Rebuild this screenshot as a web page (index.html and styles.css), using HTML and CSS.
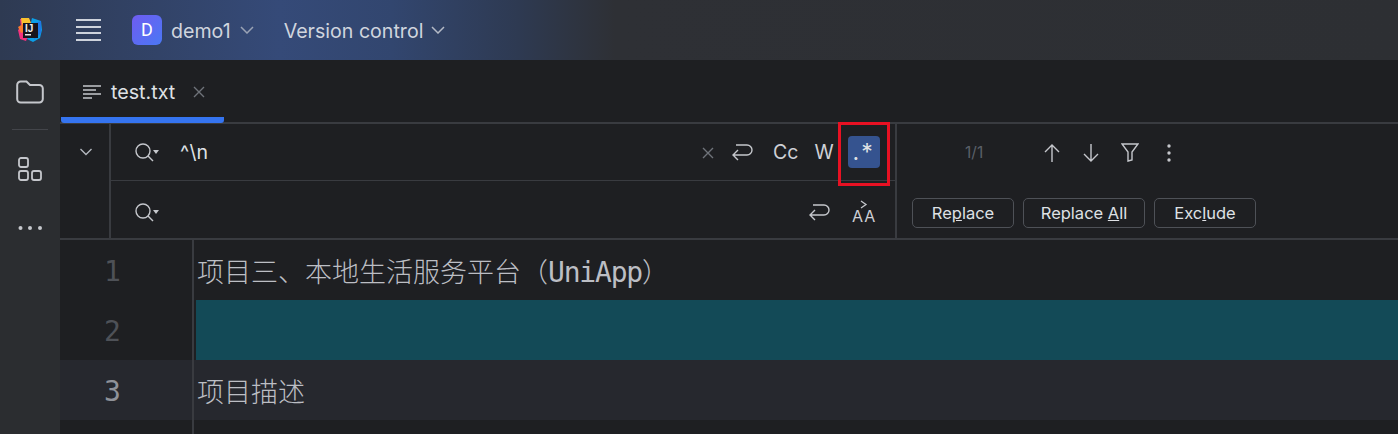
FILE: index.html
```html
<!DOCTYPE html>
<html lang="zh">
<head>
<meta charset="utf-8">
<title>test.txt</title>
<link rel="stylesheet" href="styles.css">
</head>
<body>
<header class="topbar">
  <div class="logo">
    <svg width="26" height="26" viewBox="0 0 26 26">
      <path d="M15 1l9 3 1 9-2 8-7 4-6-3z" fill="#0b9fe8"/>
      <path d="M18 6l6-2v12l-7 7z" fill="#1e78e6"/>
      <path d="M3 2h9l3 8-6 14-6-2-2-9 3-3z" fill="#f5317f"/>
      <path d="M4 1h8l2 5-9 3z" fill="#f9c22e"/>
      <path d="M1 10l5-3 1 8-3 1z" fill="#fb7a2e"/>
      <rect x="6" y="6" width="15" height="15" fill="#17141d"/>
      <rect x="8" y="17" width="6" height="1.500" fill="#e8e8e8"/>
    </svg>
    <span class="logo-text">IJ</span>
  </div>
  <div class="burger"><span></span><span></span><span></span><span></span></div>
  <div class="badge">D</div>
  <span class="menu-label project">demo1</span>
  <svg class="chev" width="14" height="8" viewBox="0 0 14 8"><path d="M1 1l6 6 6-6" fill="none" stroke="#9aa3b5" stroke-width="1.500"/></svg>
  <span class="menu-label vcs">Version control</span>
  <svg class="chev" width="14" height="8" viewBox="0 0 14 8"><path d="M1 1l6 6 6-6" fill="none" stroke="#b4bac6" stroke-width="1.500"/></svg>
</header>

<div class="body">
  <aside class="rail">
    <svg class="rail-folder" width="28" height="24" viewBox="0 0 28 24"><path d="M1.200 5a3.500 3.500 0 0 1 3.500-3.500h5.800l3.500 3.500h9.300a3.500 3.500 0 0 1 3.500 3.500v10.500a3.500 3.500 0 0 1-3.500 3.500H4.700a3.500 3.500 0 0 1-3.500-3.500z" fill="none" stroke="#c5c7cc" stroke-width="2"/></svg>
    <div class="rail-div"></div>
    <svg class="rail-group" width="24" height="24" viewBox="0 0 24 24" fill="none" stroke="#c5c7cc" stroke-width="1.800"><rect x="1" y="1" width="9" height="9" rx="2"/><rect x="1" y="14" width="9" height="9" rx="2"/><rect x="14" y="14" width="9" height="9" rx="2"/></svg>
    <svg class="rail-dots" width="24" height="6" viewBox="0 0 24 6" fill="#c5c7cc"><circle cx="2.500" cy="3" r="2"/><circle cx="12" cy="3" r="2"/><circle cx="22" cy="3" r="2"/></svg>
  </aside>

  <main class="main">
    <div class="tabs">
      <div class="tab">
        <svg width="18" height="14" viewBox="0 0 18 14" stroke="#c5c7cc" stroke-width="1.400"><path d="M0 1h18M0 5h13M0 9h18M0 13h9"/></svg>
        <span class="tab-name">test.txt</span>
        <svg class="tab-close" width="12" height="12" viewBox="0 0 12 12" stroke="#6f737a" stroke-width="1.400"><path d="M1 1l10 10M11 1L1 11"/></svg>
      </div>
    </div>

    <section class="find">
      <div class="find-toggle">
        <svg width="14" height="8" viewBox="0 0 14 8"><path d="M1.500 1l5.500 5.500L12.500 1" fill="none" stroke="#b4b8bf" stroke-width="1.400"/></svg>
      </div>
      <div class="find-fields">
        <div class="field field-top">
          <svg class="search" width="24" height="20" viewBox="0 0 24 20"><circle cx="8" cy="8" r="7" fill="none" stroke="#c5c7cc" stroke-width="1.400"/><path d="M13 13l5 5" stroke="#c5c7cc" stroke-width="1.400"/><path d="M18 7h6l-3 4z" fill="#c5c7cc"/></svg>
          <span class="query">^\n</span>
          <svg class="clear" width="12" height="12" viewBox="0 0 12 12" stroke="#6f737a" stroke-width="1.400"><path d="M1 1l10 10M11 1L1 11"/></svg>
          <svg class="wrap" width="22" height="20" viewBox="0 0 22 20"><path d="M5 3h11a5 5 0 0 1 0 10H2m5-5l-5 5 5 5" fill="none" stroke="#c5c7cc" stroke-width="1.400"/></svg>
          <span class="opt opt-cc">Cc</span>
          <span class="opt opt-w">W</span>
          <span class="opt-regex">.*</span>
        </div>
        <div class="field field-bottom">
          <svg class="search" width="24" height="20" viewBox="0 0 24 20"><circle cx="8" cy="8" r="7" fill="none" stroke="#c5c7cc" stroke-width="1.400"/><path d="M13 13l5 5" stroke="#c5c7cc" stroke-width="1.400"/><path d="M18 7h6l-3 4z" fill="#c5c7cc"/></svg>
          <span class="spacer"></span>
          <svg class="wrap-2" width="22" height="20" viewBox="0 0 22 20"><path d="M5 3h11a5 5 0 0 1 0 10H2m5-5l-5 5 5 5" fill="none" stroke="#c5c7cc" stroke-width="1.400"/></svg>
          <div class="preserve">
            <svg width="8" height="9" viewBox="0 0 8 9"><path d="M1 1l5 3.500L1 8" fill="none" stroke="#c5c7cc" stroke-width="1.300"/></svg>
            <span class="preserve-text">AA</span>
          </div>
        </div>
      </div>
      <div class="find-side">
        <div class="side-top">
          <span class="count">1/1</span>
          <svg class="arrow-up" width="16" height="20" viewBox="0 0 16 20"><path d="M8 19V2M1 9l7-7 7 7" fill="none" stroke="#c5c7cc" stroke-width="1.400"/></svg>
          <svg class="arrow-down" width="16" height="20" viewBox="0 0 16 20"><path d="M8 1v17M1 11l7 7 7-7" fill="none" stroke="#c5c7cc" stroke-width="1.400"/></svg>
          <svg class="filter" width="18" height="19" viewBox="0 0 18 19"><path d="M1 1h16l-6 8v8l-4 1V9z" fill="none" stroke="#c5c7cc" stroke-width="1.400"/></svg>
          <svg class="more" width="4" height="18" viewBox="0 0 4 18" fill="#c5c7cc"><circle cx="2" cy="2" r="1.700"/><circle cx="2" cy="9" r="1.700"/><circle cx="2" cy="16" r="1.700"/></svg>
        </div>
        <div class="side-bottom">
          <button class="btn btn-a">Re<u>p</u>lace</button>
          <button class="btn btn-b">Replace <u>A</u>ll</button>
          <button class="btn btn-a">Exc<u>l</u>ude</button>
        </div>
      </div>
      <div class="red-box"></div>
    </section>

    <section class="editor">
      <div class="row"><div class="num">1</div><div class="code">项目三、本地生活服务平台（<span class="latin">UniApp</span>）</div></div>
      <div class="row"><div class="num">2</div><div class="code match"></div></div>
      <div class="row current"><div class="num">3</div><div class="code">项目描述</div></div>
      <div class="row tail"><div class="num"></div><div class="code"></div></div>
    </section>
  </main>
</div>
</body>
</html>
```

FILE: styles.css
```css
* { box-sizing: border-box; }
html, body { margin: 0; height: 100%; overflow: hidden; }
body {
  background: #1e1f22;
  color: #dfe1e5;
  font-family: Inter, "Noto Sans", sans-serif;
  width: 1398px;
  height: 434px;
}
svg { display: block; flex: none; }

.topbar {
  height: 60px;
  display: flex;
  align-items: center;
  background: linear-gradient(90deg, #2e3a52 0%, #354a78 20%, #32466f 28%, #2e3a52 37%, #2e3035 44%, #2d2f33 100%);
  padding-left: 17px;
}
.logo { position: relative; width: 26px; height: 26px; }
.logo-text {
  position: absolute; left: 8px; top: 6px;
  font: 700 10px/11px "Liberation Sans", sans-serif;
  color: #f0f0f0;
}
.burger { margin-left: 33px; width: 25px; display: flex; flex-direction: column; gap: 4.600px; }
.burger span { display: block; height: 2px; background: #ced3dc; }
.badge {
  margin-left: 31px;
  width: 30px; height: 30px; border-radius: 6px;
  background: linear-gradient(135deg, #6f5cf0, #4a78f5);
  color: #fff;
  font: 18px/30px Roboto, sans-serif;
  text-align: center;
}
.menu-label { font-size: 19.600px; line-height: 26px; padding-top: 2px; color: #d0d5de; white-space: nowrap; }
.project { margin-left: 9px; }
.project + .chev { margin-left: 9px; }
.vcs { margin-left: 30px; }
.vcs + .chev { margin-left: 8px; }

.body { display: flex; height: 374px; }
.rail {
  width: 60px;
  background: #2b2d30;
  display: flex;
  flex-direction: column;
  align-items: center;
  padding-top: 20px;
}
.rail-div { width: 36px; height: 1px; background: #43454a; margin-top: 25px; }
.rail-group { margin-top: 27px; }
.rail-dots { margin-top: 44px; }

.main { flex: 1; min-width: 0; display: flex; flex-direction: column; }

.tabs { height: 64px; padding-left: 1px; border-bottom: 2px solid #393b40; position: relative; }
.tab {
  width: 163px; height: 63px;
  display: flex; align-items: center;
  padding: 6px 0 0 22px;
  border-bottom: 6px solid #3574f0;
  border-radius: 0 0 3px 3px;
  margin-bottom: -1px;
}
.tab-name { margin-left: 10px; font-size: 19.700px; color: #dfe1e5; }
.tab-close { margin-left: 18px; }

.find {
  height: 116px;
  display: flex;
  border-bottom: 2px solid #393b40;
  position: relative;
}
.find-toggle {
  width: 51px;
  border-right: 2px solid #393b40;
  display: flex;
  justify-content: center;
  padding: 24px 0 0 2px;
}
.find-fields {
  width: 786px;
  border-right: 2px solid #393b40;
  display: flex;
  flex-direction: column;
}
.field { display: flex; align-items: center; padding-left: 24px; }
.field-top { height: 57px; border-bottom: 1px solid #393b40; }
.field-bottom { flex: 1; padding-top: 5px; }
.search { margin-top: 2px; }
.query {
  margin-left: 21px;
  font-size: 19.500px;
  color: #dfe1e5;
  width: 520px;
  letter-spacing: 0.200px;
}
.clear { margin-left: 2px; margin-top: 1px; }
.wrap { margin-left: 17px; }
.opt { font: 19.500px/24px Inter, sans-serif; color: #ced0d6; }
.opt-cc { margin-left: 20px; }
.opt-w { margin-left: 16px; }
.opt-regex {
  margin-left: 14px;
  width: 32px; height: 32px;
  border-radius: 4px;
  background: #35538f;
  color: #dfe1e5;
  font: 23px/32px Inter, sans-serif;
  letter-spacing: 2px;
  text-align: center;
}
.spacer { flex: 1; }
.wrap-2 { margin-right: 21px; }
.preserve { width: 24px; margin-right: 20px; position: relative; height: 26px; }
.preserve svg { position: absolute; left: 9px; top: 1px; }
.preserve-text {
  position: absolute; left: 1px; bottom: 1px;
  font-size: 16px; line-height: 16px; color: #ced0d6; letter-spacing: 1px;
}

.find-side { flex: 1; display: flex; flex-direction: column; }
.side-top { height: 57px; display: flex; align-items: center; }
.count { margin-left: 68px; width: 22px; font-size: 15.500px; color: #5a6069; }
.arrow-up { margin-left: 57px; margin-top: 0; }
.arrow-down { margin-left: 23px; }
.filter { margin-left: 22px; }
.more { margin-left: 28px; }
.side-bottom { display: flex; gap: 9px; padding: 17px 0 0 15px; }
.btn {
  height: 30px;
  background: transparent;
  border: 1.500px solid #4e5157;
  border-radius: 5px;
  color: #dfe1e5;
  font: 16.500px/1 Inter, sans-serif;
  padding: 0;
}
.btn-a { width: 102px; }
.btn-b { width: 122px; }
.red-box {
  position: absolute;
  left: 778px; top: -2px;
  width: 52px; height: 64px;
  border: 3px solid #e81123;
}

.editor { flex: 1; display: flex; flex-direction: column; }
.row { height: 60px; display: flex; }
.row.tail { height: 14px; }
.num {
  width: 134px;
  border-right: 2px solid #393b40;
  color: #4e5157;
  font: 28px/60px "DejaVu Sans Mono", monospace;
  padding: 2px 0 0 44px;
}
.code {
  flex: 1;
  padding: 2px 0 0 1px;
  margin-left: 2px;
  color: #bcbec4;
  font: 300 27px/58px "Noto Sans CJK SC", monospace;
  white-space: nowrap;
}
.latin { font: 400 28px/58px "DejaVu Sans Mono", monospace; letter-spacing: -1.200px; }
.match { background: #134a57; }
.current { background: #26282e; }
.current .num { color: #8f9299; }
```
